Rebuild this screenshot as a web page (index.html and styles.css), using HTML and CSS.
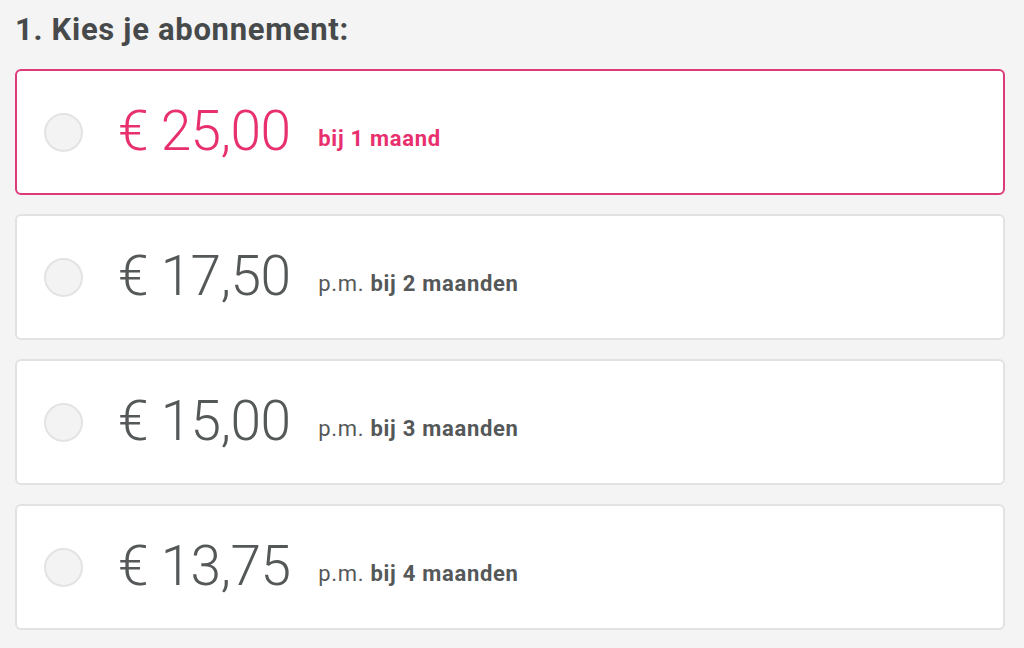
FILE: index.html
```html
<!DOCTYPE html>
<html lang="nl">
<head>
<meta charset="utf-8">
<title>Kies je abonnement</title>
<link rel="stylesheet" href="styles.css">
</head>
<body>
<main class="page">
  <h2 class="title">1. Kies je abonnement:</h2>
  <div class="options">
    <label class="option selected">
      <span class="radio"></span>
      <span class="price">€ 25,00</span>
      <span class="term"><b>bij 1 maand</b></span>
    </label>
    <label class="option">
      <span class="radio"></span>
      <span class="price">€ 17,50</span>
      <span class="term">p.m. <b>bij 2 maanden</b></span>
    </label>
    <label class="option">
      <span class="radio"></span>
      <span class="price">€ 15,00</span>
      <span class="term">p.m. <b>bij 3 maanden</b></span>
    </label>
    <label class="option">
      <span class="radio"></span>
      <span class="price">€ 13,75</span>
      <span class="term">p.m. <b>bij 4 maanden</b></span>
    </label>
  </div>
</main>
</body>
</html>
```
FILE: styles.css
```css
html, body {
  margin: 0;
  padding: 0;
  background: #f4f4f4;
}

body {
  font-family: Roboto, "Liberation Sans", sans-serif;
  color: #555859;
}

.page {
  padding: 11px 19px 0 15px;
}

.title {
  margin: 0;
  height: 58px;
  font-size: 31px;
  line-height: 38px;
  font-weight: 700;
  color: #474a4b;
  letter-spacing: 0.7px;
}

.options {
  display: flex;
  flex-direction: column;
  gap: 19px;
}

.option {
  box-sizing: border-box;
  height: 126px;
  display: flex;
  align-items: center;
  padding-left: 27px;
  background: #fff;
  border: 2px solid #e2e2e2;
  border-radius: 6px;
}

.option.selected {
  border-color: #dc3a78;
  color: #e8306f;
}

.radio {
  flex: none;
  box-sizing: border-box;
  width: 39px;
  height: 39px;
  border-radius: 50%;
  background: #f3f3f3;
  border: 2px solid #e3e3e3;
  margin-right: 35px;
}

.price {
  font-size: 55px;
  font-weight: 300;
  line-height: 1;
  letter-spacing: -0.6px;
  margin-right: 28px;
  position: relative;
  top: -1px;
}

.term {
  font-size: 22px;
  font-weight: 400;
  letter-spacing: 0.7px;
  margin-top: 12px;
}

.term b {
  font-weight: 700;
}
```
